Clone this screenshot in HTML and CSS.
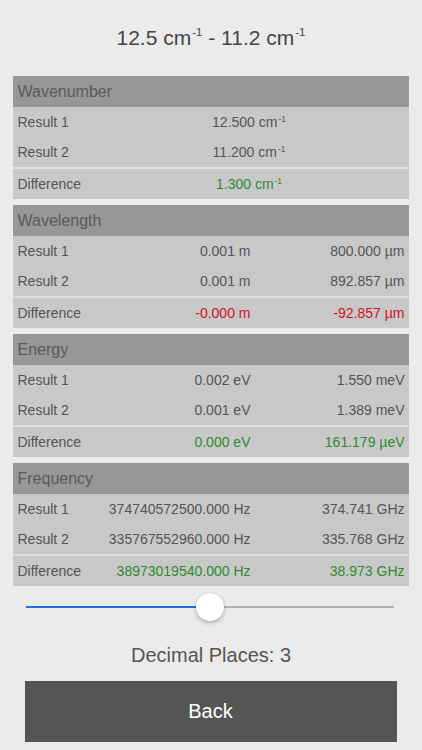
FILE: index.html
```html
<!DOCTYPE html>
<html>
<head>
<meta charset="utf-8">
<link rel="stylesheet" href="styles.css">
</head>
<body>
<div class="page">
  <h1 class="title">12.5 cm<sup>-1</sup> - 11.2 cm<sup>-1</sup></h1>

  <div class="tables">
    <section class="sec">
      <div class="head">Wavenumber</div>
      <div class="row"><span class="lbl">Result 1</span><span class="one">12.500 cm<sup>-1</sup></span></div>
      <div class="row"><span class="lbl">Result 2</span><span class="one">11.200 cm<sup>-1</sup></span></div>
      <div class="row diff"><span class="lbl">Difference</span><span class="one green">1.300 cm<sup>-1</sup></span></div>
    </section>

    <section class="sec">
      <div class="head">Wavelength</div>
      <div class="row"><span class="lbl">Result 1</span><span class="mid">0.001 m</span><span class="right">800.000 µm</span></div>
      <div class="row"><span class="lbl">Result 2</span><span class="mid">0.001 m</span><span class="right">892.857 µm</span></div>
      <div class="row diff"><span class="lbl">Difference</span><span class="mid red">-0.000 m</span><span class="right red">-92.857 µm</span></div>
    </section>

    <section class="sec">
      <div class="head">Energy</div>
      <div class="row"><span class="lbl">Result 1</span><span class="mid">0.002 eV</span><span class="right">1.550 meV</span></div>
      <div class="row"><span class="lbl">Result 2</span><span class="mid">0.001 eV</span><span class="right">1.389 meV</span></div>
      <div class="row diff"><span class="lbl">Difference</span><span class="mid green">0.000 eV</span><span class="right green">161.179 µeV</span></div>
    </section>

    <section class="sec">
      <div class="head">Frequency</div>
      <div class="row"><span class="lbl">Result 1</span><span class="mid">374740572500.000 Hz</span><span class="right">374.741 GHz</span></div>
      <div class="row"><span class="lbl">Result 2</span><span class="mid">335767552960.000 Hz</span><span class="right">335.768 GHz</span></div>
      <div class="row diff"><span class="lbl">Difference</span><span class="mid green">38973019540.000 Hz</span><span class="right green">38.973 GHz</span></div>
    </section>
  </div>

  <div class="slider">
    <div class="track">
      <div class="fill"></div>
      <div class="rest"></div>
    </div>
    <div class="thumb"></div>
  </div>

  <div class="places">Decimal Places: 3</div>

  <button class="back">Back</button>
</div>
</body>
</html>
```

FILE: styles.css
```css
* { box-sizing: border-box; }
html, body {
  margin: 0;
  padding: 0;
  background: #ebebeb;
}
body {
  font-family: "Liberation Sans", Arial, sans-serif;
  color: #555555;
  width: 422px;
  height: 750px;
  overflow: hidden;
}
.page {
  display: flex;
  flex-direction: column;
  align-items: center;
}
.title {
  margin: 26px 0 0 0;
  height: 50px;
  font-size: 21px;
  font-weight: normal;
  color: #444444;
  line-height: 24px;
  text-align: center;
}
sup {
  font-size: 0.55em;
  vertical-align: 0;
  position: relative;
  top: -0.75em;
  margin-left: 1px;
}
.tables {
  width: 396px;
  margin-left: -1px;
  display: flex;
  flex-direction: column;
  gap: 6px;
}
.sec {
  display: flex;
  flex-direction: column;
  background: #c8c8c8;
}
.head {
  height: 31px;
  background: #979797;
  font-size: 16px;
  line-height: 31px;
  padding-left: 5px;
  color: #5a5a5a;
}
.row {
  height: 30px;
  display: grid;
  grid-template-columns: 80px 153px 1fr;
  align-items: center;
  font-size: 14px;
  color: #555555;
  padding-left: 5px;
  padding-right: 4px;
}
.row.diff {
  border-top: 2px solid #dddddd;
  height: 32px;
}
.mid { text-align: right; }
.right { text-align: right; }
.one {
  grid-column: 2 / 4;
  text-align: center;
  padding-right: 4px;
}
.row sup { font-size: 0.6em; top: -0.6em; }
.green { color: #2e8b2e; }
.red { color: #d3101e; }

.slider {
  position: relative;
  width: 368px;
  height: 40px;
  margin-top: 1px;
  margin-left: -3px;
  display: flex;
  align-items: center;
}
.track {
  width: 100%;
  display: flex;
  height: 2px;
}
.fill {
  width: 184px;
  background: #1e6fdc;
}
.rest {
  flex: 1;
  background: #b3b3b3;
}
.thumb {
  position: absolute;
  left: 170px;
  top: 6px;
  width: 28px;
  height: 28px;
  border-radius: 50%;
  background: #ffffff;
  box-shadow: 0 2px 4px rgba(0,0,0,0.25), 0 0 1px rgba(0,0,0,0.2);
}
.places {
  margin-top: 16px;
  font-size: 20px;
  line-height: 24px;
  color: #555555;
}
.back {
  margin-top: 14px;
  width: 372px;
  height: 61px;
  background: #555555;
  border: none;
  color: #ffffff;
  font-family: "Liberation Sans", Arial, sans-serif;
  font-size: 20px;
  margin-left: -1px;
}
```
